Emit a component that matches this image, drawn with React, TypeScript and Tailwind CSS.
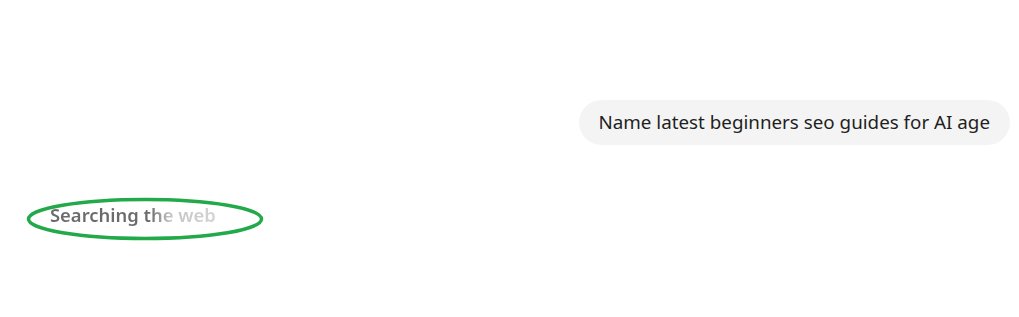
export default function App() {
  return (
    <div
      className="relative w-[1019px] h-[317px] bg-white overflow-hidden"
      style={{ fontFamily: '"Noto Sans", "Open Sans", sans-serif' }}
    >
      <div className="flex flex-col pt-[100px] pr-[9px] pl-[50px]">
        <div className="flex justify-end">
          <div className="h-[45px] flex items-center rounded-full bg-[#f4f4f4] px-5 text-[18.8px] text-[#1f1f1f]">
            Name latest beginners seo guides for AI age
          </div>
        </div>
        <div className="mt-[58px] h-[24px] flex items-center">
          <span
            className="text-[18.4px] font-semibold bg-clip-text text-transparent bg-[linear-gradient(90deg,#6b6b6b_0%,#6b6b6b_60%,#c4c4c4_72%,#d4d4d4_100%)]"
          >
            Searching the web
          </span>
        </div>
      </div>
      <svg className="absolute left-[25px] top-[196px]" width="240" height="46" viewBox="0 0 240 46">
        <ellipse cx="120" cy="23" rx="116.5" ry="19.5" fill="none" stroke="#22a94a" strokeWidth="3.5" />
      </svg>
    </div>
  );
}
